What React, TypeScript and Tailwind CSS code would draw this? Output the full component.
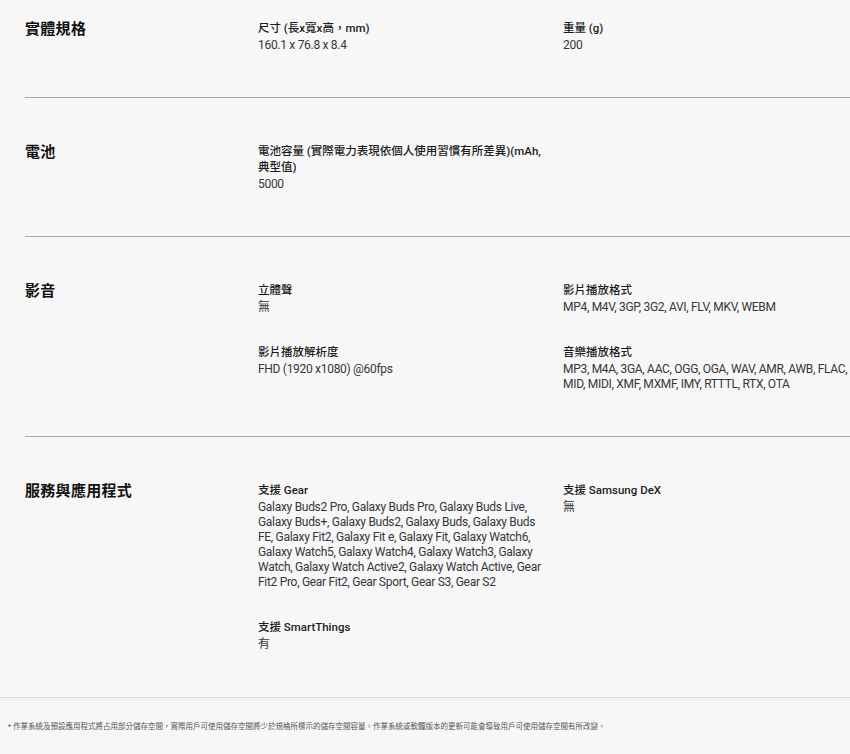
const font = '"Roboto", "Noto Sans CJK TC", sans-serif'

type Spec = { label: string; value: string }

function SpecItem({ spec }: { spec: Spec }) {
  return (
    <div className="min-w-0">
      <p className="text-[11.5px] leading-[16px] font-medium text-[#1c1c1c]">{spec.label}</p>
      <p className="mt-[2px] text-[12px] leading-[15px] text-[#363636] tracking-[-0.3px]">{spec.value}</p>
    </div>
  )
}

function Section({ title, items, first, last }: { title: string; items: Spec[]; first?: boolean; last?: boolean }) {
  return (
    <section
      className={
        'ml-[25px] grid grid-cols-[233px_1fr] ' +
        (first ? 'pt-[20px] ' : 'pt-[45px] ') +
        (last ? 'pb-[45px]' : 'pb-[44px] border-b border-[#a9a9a9]')
      }
    >
      <h2 className="text-[15px] leading-[18px] font-bold text-[#111] tracking-[0.3px]">{title}</h2>
      <div className="grid grid-cols-[290px_287px] gap-x-[15px] gap-y-[29px]">
        {items.map((s) => (
          <SpecItem key={s.label} spec={s} />
        ))}
      </div>
    </section>
  )
}

export default function App() {
  return (
    <div lang="zh-Hant-TW" className="min-h-[754px] w-[850px] bg-[#f7f7f7] overflow-hidden" style={{ fontFamily: font }}>
      <Section
        first
        title="實體規格"
        items={[
          { label: '尺寸 (長x寬x高，mm)', value: '160.1 x 76.8 x 8.4' },
          { label: '重量 (g)', value: '200' },
        ]}
      />
      <Section
        title="電池"
        items={[{ label: '電池容量 (實際電力表現依個人使用習慣有所差異)(mAh, 典型值)', value: '5000' }]}
      />
      <Section
        title="影音"
        items={[
          { label: '立體聲', value: '無' },
          { label: '影片播放格式', value: 'MP4, M4V, 3GP, 3G2, AVI, FLV, MKV, WEBM' },
          { label: '影片播放解析度', value: 'FHD (1920 x1080) @60fps' },
          {
            label: '音樂播放格式',
            value: 'MP3, M4A, 3GA, AAC, OGG, OGA, WAV, AMR, AWB, FLAC, MID, MIDI, XMF, MXMF, IMY, RTTTL, RTX, OTA',
          },
        ]}
      />
      <Section
        last
        title="服務與應用程式"
        items={[
          {
            label: '支援 Gear',
            value:
              'Galaxy Buds2 Pro, Galaxy Buds Pro, Galaxy Buds Live, Galaxy Buds+, Galaxy Buds2, Galaxy Buds, Galaxy Buds FE, Galaxy Fit2, Galaxy Fit e, Galaxy Fit, Galaxy Watch6, Galaxy Watch5, Galaxy Watch4, Galaxy Watch3, Galaxy Watch, Galaxy Watch Active2, Galaxy Watch Active, Gear Fit2 Pro, Gear Fit2, Gear Sport, Gear S3, Gear S2',
          },
          { label: '支援 Samsung DeX', value: '無' },
          { label: '支援 SmartThings', value: '有' },
        ]}
      />
      <footer className="border-t border-[#dcdcdc]">
        <div className="h-[2px] border-b border-[#ececec]" />
        <p className="px-[8px] pt-[22px] text-[7.5px] leading-[10px] text-[#555]">
          * 作業系統及預設應用程式將占用部分儲存空間，實際用戶可使用儲存空間將少於規格所標示的儲存空間容量。作業系統或軟體版本的更新可能會導致用戶可使用儲存空間有所改變。
        </p>
      </footer>
    </div>
  )
}
